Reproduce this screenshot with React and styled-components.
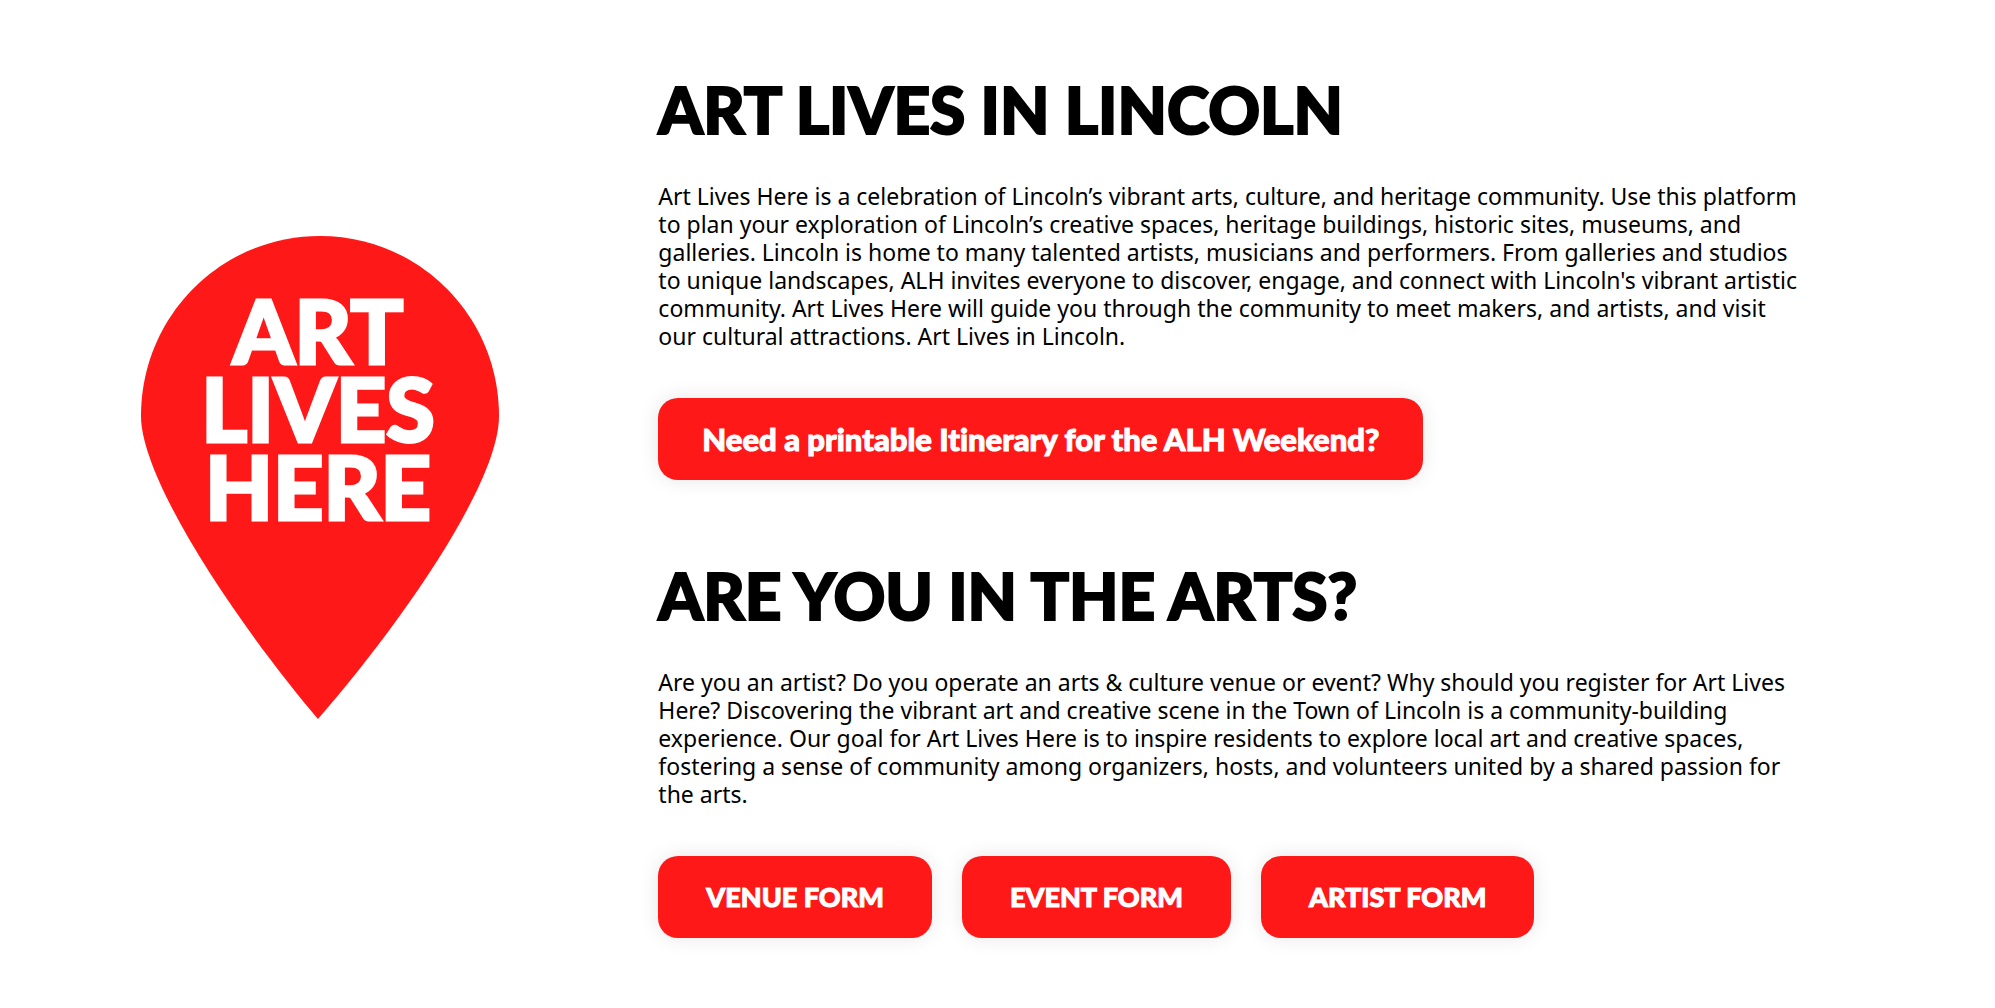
import React from "react";
import styled, { createGlobalStyle } from "styled-components";

const RED = "#ff1818";
const DISPLAY = 'Lato, "Open Sans", sans-serif';

const GlobalStyle = createGlobalStyle`
  *, *::before, *::after { box-sizing: border-box; }
  body {
    margin: 0;
    background: #fff;
    color: #000;
    font-family: "Noto Sans", sans-serif;
  }
`;

const Page = styled.main`
  display: grid;
  grid-template-columns: 33fr 67fr;
  padding: 72px 0 70px;

  @media (max-width: 900px) {
    grid-template-columns: 1fr;
    padding: 32px 24px;
  }
`;

const LogoColumn = styled.div`
  display: flex;
  align-items: center;
  justify-content: center;
  padding: 0 18px 56px 0;
`;

const Pin = styled.svg`
  display: block;
  width: 358px;
  max-width: 80%;
  height: auto;
`;

const PinText = styled.text`
  fill: #fff;
  stroke: #fff;
  stroke-width: 3px;
  font-family: ${DISPLAY};
  font-size: 88px;
  font-weight: 900;
  text-anchor: middle;
`;

const Content = styled.div`
  display: flex;
  flex-direction: column;
  gap: 78px;
  min-width: 0;
  padding-right: 14%;

  @media (max-width: 900px) {
    padding-right: 0;
  }
`;

const Block = styled.section`
  display: flex;
  flex-direction: column;
`;

const Title = styled.h2`
  margin: 0 0 34px;
  font-family: ${DISPLAY};
  font-size: 64px;
  font-weight: 900;
  line-height: 76px;
  -webkit-text-stroke: 2px currentColor;
`;

const Copy = styled.p`
  margin: 0 0 48px;
  font-size: 23px;
  line-height: 28px;
`;

const Actions = styled.div`
  display: flex;
  flex-wrap: wrap;
  gap: 30px;
`;

const Action = styled.a`
  display: flex;
  align-items: center;
  justify-content: center;
  min-height: 82px;
  padding: 0 ${({ $wide }) => ($wide ? 44 : 48)}px;
  border-radius: 20px;
  background: ${RED};
  box-shadow: 0 0 20px rgba(0, 0, 0, 0.1);
  color: #fff;
  font-family: ${DISPLAY};
  font-size: ${({ $wide }) => ($wide ? 31 : 27)}px;
  font-weight: 900;
  font-variant-ligatures: none;
  line-height: 34px;
  text-decoration: none;
  -webkit-text-stroke: 1px currentColor;
`;

function PinLogo() {
  return (
    <Pin viewBox="0 0 358 483" role="img" aria-label="Art Lives Here">
      <path
        fill={RED}
        d="M179 0C278 0 358 80 358 180C358 248 258 390 177 483C98 390 0 245 0 180C0 80 80 0 179 0Z"
      />
      <PinText x="177" y="128">ART</PinText>
      <PinText x="177" y="206">LIVES</PinText>
      <PinText x="177" y="284">HERE</PinText>
    </Pin>
  );
}

const forms = ["VENUE FORM", "EVENT FORM", "ARTIST FORM"];

export default function App() {
  return (
    <>
      <GlobalStyle />
      <Page>
        <LogoColumn>
          <PinLogo />
        </LogoColumn>
        <Content>
          <Block>
            <Title>ART LIVES IN LINCOLN</Title>
            <Copy>
              Art Lives Here is a celebration of Lincoln’s vibrant arts, culture, and heritage
              community. Use this platform to plan your exploration of Lincoln’s creative spaces,
              heritage buildings, historic sites, museums, and galleries. Lincoln is home to many
              talented artists, musicians and performers. From galleries and studios to unique
              landscapes, ALH invites everyone to discover, engage, and connect with Lincoln's
              vibrant artistic community. Art Lives Here will guide you through the community to
              meet makers, and artists, and visit our cultural attractions. Art Lives in Lincoln.
            </Copy>
            <Actions>
              <Action $wide href="#itinerary">
                Need a printable Itinerary for the ALH Weekend?
              </Action>
            </Actions>
          </Block>
          <Block>
            <Title>ARE YOU IN THE ARTS?</Title>
            <Copy>
              Are you an artist? Do you operate an arts &amp; culture venue or event? Why should you
              register for Art Lives Here? Discovering the vibrant art and creative scene in the
              Town of Lincoln is a community-building experience. Our goal for Art Lives Here is to
              inspire residents to explore local art and creative spaces, fostering a sense of
              community among organizers, hosts, and volunteers united by a shared passion for the
              arts.
            </Copy>
            <Actions>
              {forms.map((label) => (
                <Action key={label} href={"#" + label.toLowerCase().replace(" ", "-")}>
                  {label}
                </Action>
              ))}
            </Actions>
          </Block>
        </Content>
      </Page>
    </>
  );
}
